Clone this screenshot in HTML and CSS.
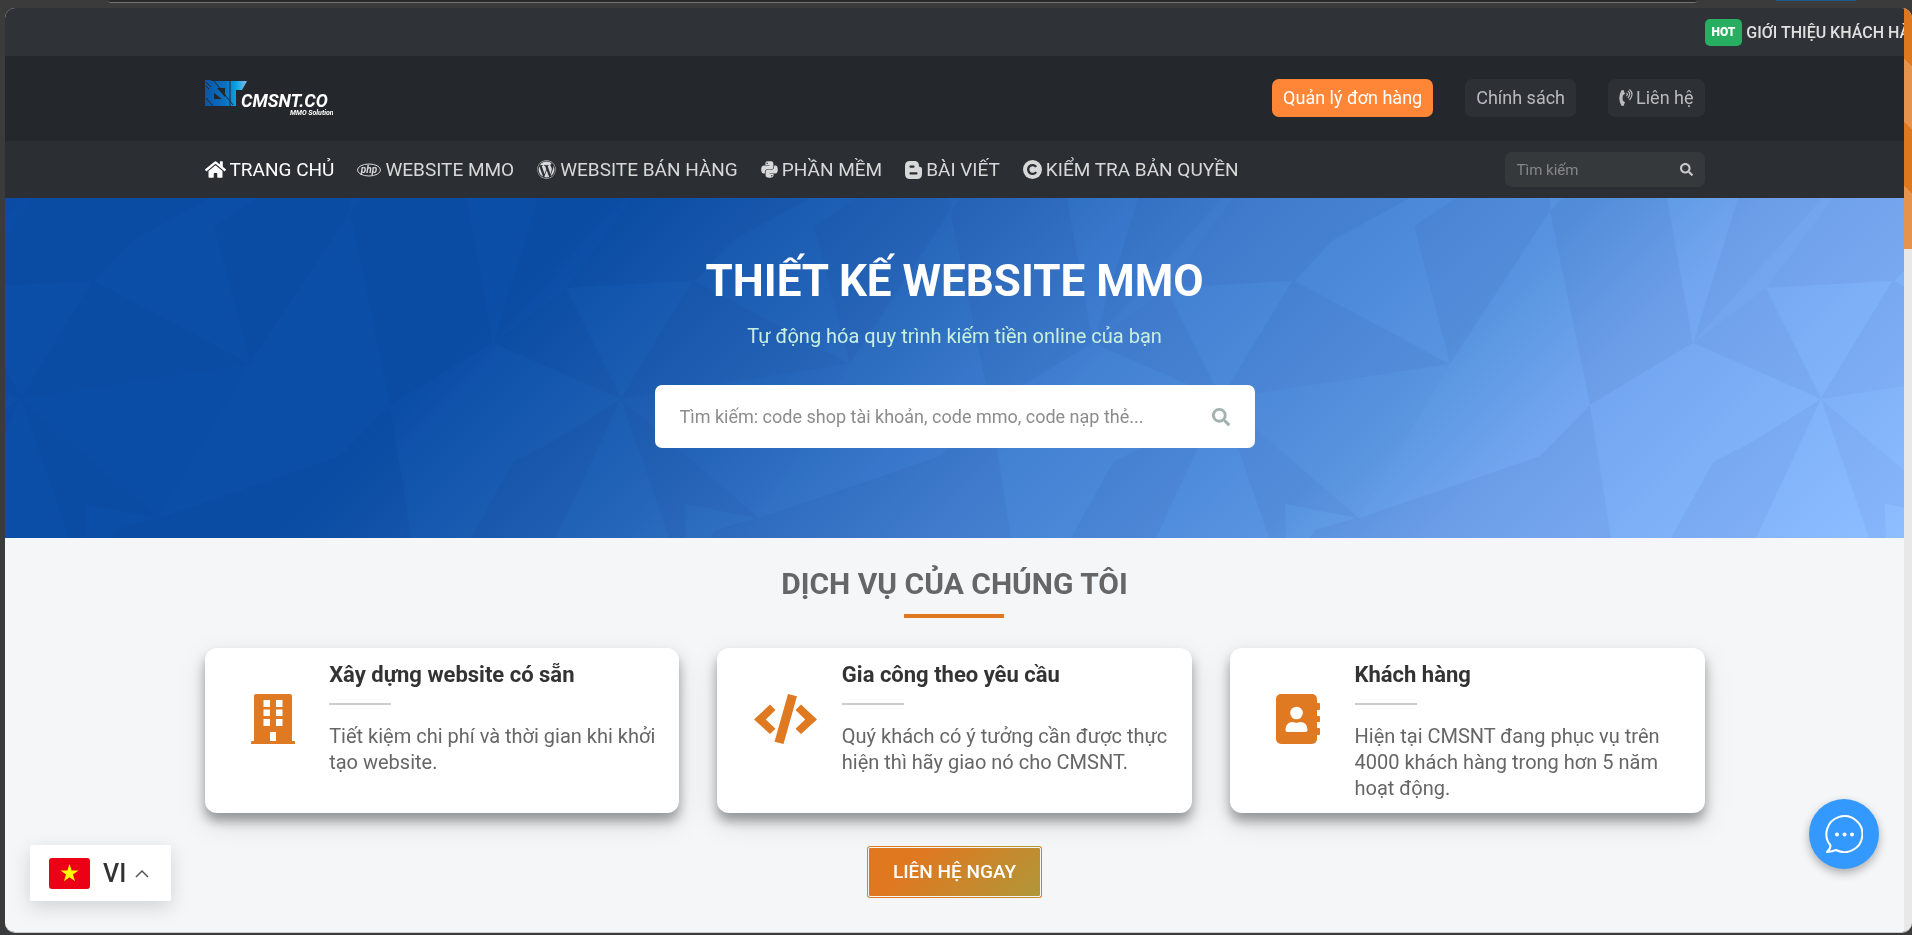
FILE: index.html
```html
<!DOCTYPE html>
<html lang="vi">

<head>
  <meta charset="UTF-8">
  <meta name="viewport" content="width=device-width, initial-scale=1.0">
  <title>CMSNT.CO - Thiết kế website MMO</title>
  <link rel="stylesheet" href="styles.css">
</head>

<body>
<svg class="sprite" aria-hidden="true">
  <symbol id="search" viewBox="0 0 512 512"><path d="M505 442.7L405.3 343c-4.5-4.5-10.6-7-17-7H372c27.6-35.3 44-79.7 44-128C416 93.1 322.9 0 208 0S0 93.1 0 208s93.1 208 208 208c48.3 0 92.7-16.4 128-44v16.3c0 6.4 2.5 12.5 7 17l99.7 99.7c9.4 9.4 24.6 9.4 33.9 0l28.3-28.3c9.4-9.4 9.4-24.6.1-34zM208 336c-70.7 0-128-57.2-128-128 0-70.7 57.2-128 128-128 70.7 0 128 57.2 128 128 0 70.7-57.2 128-128 128z"/></symbol>
</svg>

<div class="window">
  <div class="window-top">
    <div class="address"></div>
    <div class="tab-mark"></div>
  </div>

  <div class="viewport">
    <div class="page">
      <header>
        <div class="notice">
          <span class="hot">HOT</span>
          <span>GIỚI THIỆU KHÁCH HÀNG</span>
        </div>

        <div class="header-main">
          <div class="container">
            <a class="logo" href="#" aria-label="CMSNT.CO">
              <svg width="128" height="36" viewBox="0 0 128 36">
                <defs>
                  <linearGradient id="logo-blue">
                    <stop offset="0" stop-color="#0a55a5"/>
                    <stop offset=".5" stop-color="#0b72c4"/>
                    <stop offset=".75" stop-color="#08a5e4"/>
                    <stop offset="1" stop-color="#8bbcf0"/>
                  </linearGradient>
                </defs>
                <path fill="url(#logo-blue)" d="M0 0h5l2 1h35l-5 9h-6v16H0zM9 13v6h8zM12 8h8v9z" fill-rule="evenodd"/>
                <path d="M1 2l5 5M25 1v25M9 1l19 24M1 18l7 8M1 6l3 3" stroke="#24272c" stroke-width="1"/>
                <text x="36" y="27" class="logo-name">CMSNT.CO</text>
                <text x="85" y="35" class="logo-sub">MMO Solution</text>
              </svg>
            </a>
            <div class="header-links">
              <a class="pill pill-primary" href="#">Quản lý đơn hàng</a>
              <a class="pill" href="#">Chính sách</a>
              <a class="pill" href="#">
                <svg width="14" height="18" viewBox="0 0 14 18" fill="none" stroke="currentColor">
                  <path fill="currentColor" stroke="none" d="M4.500 1L6 4.800l-2 1.400q-.8 2.800 0 5.600l2 1.400L4.500 17l-2-.2Q-2 9 2.500 1.200z"/>
                  <path stroke-width="1.200" d="M7.500 4q1.600 1.300 0 3M9 2q3.300 3 0 7M10.500.5q5 4.500 0 10.500"/>
                </svg>
                Liên hệ
              </a>
            </div>
          </div>
        </div>

        <div class="header-nav">
          <div class="container">
            <nav>
              <a class="active" href="#">
                <svg width="21" height="19" viewBox="0 0 576 512"><path d="M280.370 148.260L96 300.110V464a16 16 0 0 0 16 16l112.060-.29a16 16 0 0 0 15.920-16V368a16 16 0 0 1 16-16h64a16 16 0 0 1 16 16v95.640a16 16 0 0 0 16 16.050L464 480a16 16 0 0 0 16-16V300L295.670 148.260a12.190 12.190 0 0 0-15.300 0zM571.600 251.470L488 182.560V44.050a12 12 0 0 0-12-12h-56a12 12 0 0 0-12 12v72.610L318.470 43a48 48 0 0 0-61 0L4.340 251.470a12 12 0 0 0-1.600 16.900l25.500 31A12 12 0 0 0 45.150 301l235.220-193.740a12.190 12.190 0 0 1 15.300 0L530.900 301a12 12 0 0 0 16.900-1.600l25.500-31a12 12 0 0 0-1.700-16.930z"/></svg>
                TRANG CHỦ
              </a>
              <a href="#">
                <svg width="24" height="18" viewBox="0 0 24 18"><ellipse cx="12" cy="9" rx="11.500" ry="6" fill="none" stroke="currentColor"/><text x="12" y="12" class="php">php</text></svg>
                WEBSITE MMO
              </a>
              <a href="#">
                <svg width="19" height="19" viewBox="0 0 512 512"><path d="M61.700 169.400l101.500 278C92.200 413 43.300 340.200 43.300 256c0-30.900 6.600-60.100 18.400-86.600zm337.900 75.900c0-26.300-9.400-44.500-17.500-58.700-10.800-17.500-20.900-32.400-20.900-49.900 0-19.600 14.800-37.800 35.700-37.800.9 0 1.800.1 2.800.2-37.900-34.700-88.300-55.900-143.700-55.900-74.300 0-139.700 38.100-177.800 95.900 5 .2 9.700.3 13.700.3 22.200 0 56.700-2.700 56.700-2.700 11.500-.7 12.800 16.200 1.400 17.500 0 0-11.500 1.300-24.300 2l77.500 230.400L249.800 247l-33.100-90.800c-11.500-.7-22.300-2-22.300-2-11.500-.7-10.100-18.200 1.300-17.500 0 0 35.100 2.700 56 2.700 22.200 0 56.700-2.700 56.700-2.700 11.500-.7 12.800 16.200 1.400 17.500 0 0-11.500 1.300-24.300 2l76.900 228.700 21.200-70.900c9-29.400 16-50.500 16-68.700zm-139.900 29.300l-63.800 185.500c19.100 5.600 39.200 8.700 60.100 8.700 24.800 0 48.500-4.300 70.600-12.100-.6-.9-1.100-1.900-1.500-2.900l-65.400-179.200zm183-120.700c.9 6.800 1.400 14 1.400 21.900 0 21.600-4 45.800-16.200 76.200l-65 187.900C426.200 403 468.700 334.500 468.700 256c0-37-9.400-71.800-26-102.100zM504 256c0 136.800-111.300 248-248 248C119.200 504 8 392.700 8 256 8 119.200 119.200 8 256 8c136.700 0 248 111.200 248 248zm-11.400 0c0-130.500-106.200-236.600-236.600-236.600C125.500 19.400 19.400 125.500 19.400 256S125.600 492.600 256 492.600c130.500 0 236.600-106.100 236.600-236.600z"/></svg>
                WEBSITE BÁN HÀNG
              </a>
              <a href="#">
                <svg width="17" height="19" viewBox="0 0 448 512"><path d="M439.800 200.500c-7.700-30.900-22.300-54.200-53.400-54.200h-40.100v47.400c0 36.800-31.200 67.800-66.800 67.800H172.700c-29.200 0-53.400 25-53.400 54.300v101.800c0 29 25.200 46 53.400 54.300 33.800 9.900 66.300 11.700 106.800 0 26.900-7.800 53.400-23.500 53.400-54.300v-40.700H226.200v-13.600h160.200c31.100 0 42.600-21.700 53.400-54.200 11.200-33.500 10.700-65.700 0-108.600zM286.200 404c11.100 0 20.100 9.100 20.100 20.300 0 11.300-9 20.400-20.100 20.400-11 0-20.100-9.200-20.100-20.400.1-11.300 9.100-20.300 20.100-20.300zM167.800 248.100h106.800c29.700 0 53.400-24.500 53.400-54.300V91.900c0-29-24.400-50.700-53.400-55.600-35.800-5.900-74.700-5.600-106.800.1-45.200 8-53.400 24.700-53.400 55.600v40.700h106.900v13.600h-147c-31.100 0-58.300 18.700-66.800 54.200-9.800 40.700-10.200 66.100 0 108.600 7.600 31.600 25.700 54.200 56.800 54.200H101v-48.800c0-35.300 30.500-66.400 66.800-66.400zm-6.700-142.600c-11.100 0-20.100-9.100-20.100-20.300.1-11.300 9-20.400 20.100-20.400 11 0 20.100 9.200 20.100 20.400s-9 20.300-20.100 20.300z"/></svg>
                PHẦN MỀM
              </a>
              <a href="#">
                <svg width="17" height="18" viewBox="0 0 17 18"><path fill-rule="evenodd" d="M5 0h4.500C13 0 14 2.500 14 5c0 1.500 3 .5 3 2.500V13q0 5-5 5H5q-5 0-5-5V5q0-5 5-5zm0 4.500q-1.300 1.100 0 2.300h4q1.300-1.200 0-2.300zm0 6.700q-1.300 1.200 0 2.300h7q1.300-1.100 0-2.300z"/></svg>
                BÀI VIẾT
              </a>
              <a href="#">
                <svg width="19" height="19" viewBox="0 0 18 18"><circle cx="9" cy="9" r="9"/><path d="M12.500 11.500a4.200 4.200 0 1 1 0-5" fill="none" stroke="#2b2e33" stroke-width="2.200"/></svg>
                KIỂM TRA BẢN QUYỀN
              </a>
            </nav>
            <form class="nav-search">
              <input type="text" placeholder="Tìm kiếm" aria-label="Tìm kiếm">
              <button type="button" aria-label="Tìm"><svg width="13" height="13"><use href="#search"/></svg></button>
            </form>
          </div>
        </div>
      </header>

      <section class="hero">
        <svg class="hero-pattern" width="100%" height="100%" aria-hidden="true">
          <defs>
            <pattern id="facets" width="600" height="340" patternUnits="userSpaceOnUse">
              <g fill="#0b0b07">
                <path d="M205 0h46l-42 28 36 138L90 83l37-40z"/>
                <path d="M345 13l40 194-50 51-181 62 91-154z"/>
                <path d="M345 13V0h12z"/>
                <path d="M-39 90l126-7-71 117z"/>
                <path d="M561 90l126-7-71 117z"/>
                <path d="M462 0h71l-45 145z"/>
                <path d="M488 145l-103 62 21 133h60l42-76 37-19 71-44z"/>
                <path d="M-112 145l128 56-71 44z"/>
                <path d="M16 201l-65 139H64z"/>
                <path d="M616 201l-65 139h113z"/>
                <path d="M80 306l71 14-41 12-5 8H81z"/>
                <path opacity=".7" d="M16 201l229-35-91 154z"/>
                <path opacity=".5" d="M488 145L618 0h10l-67 90zM-112 145L18 0h10l-67 90z"/>
              </g>
            </pattern>
          </defs>
          <rect width="100%" height="100%" fill="url(#facets)"/>
        </svg>
        <div class="hero-content">
          <h1>THIẾT KẾ WEBSITE MMO</h1>
          <p>Tự động hóa quy trình kiếm tiền online của bạn</p>
          <form class="hero-search">
            <input type="text" placeholder="Tìm kiếm: code shop tài khoản, code mmo, code nạp thẻ..." aria-label="Tìm kiếm sản phẩm">
            <button type="button" aria-label="Tìm"><svg width="18" height="18"><use href="#search"/></svg></button>
          </form>
        </div>
      </section>

      <section class="services">
        <h2>DỊCH VỤ CỦA CHÚNG TÔI</h2>
        <div class="container cards">
          <div class="card">
            <div class="card-icon">
              <svg width="44" height="50" viewBox="0 0 44 50"><path fill-rule="evenodd" d="M5 0h34q2 0 2 2v45h2q1 0 1 1v2H0v-2q0-1 1-1h2V2q0-2 2-2zm7.500 6v7H19V6zm12.500 0v7h6.500V6zM12.500 15.500V22H19v-6.500zm12.500 0V22h6.500v-6.500zM12.500 25v7H19v-7zM25 25v7h6.500v-7zm-6 13v9h6v-9z"/></svg>
            </div>
            <div class="card-text">
              <h3>Xây dựng website có sẵn</h3>
              <p>Tiết kiệm chi phí và thời gian khi khởi tạo website.</p>
            </div>
          </div>
          <div class="card">
            <div class="card-icon">
              <svg width="63" height="50" viewBox="0 0 63 50"><path d="M34 0l9 2.200L29.500 50l-9-2.200zM16 10.500l5.500 5.500-9.700 9.500 9.700 9.200L16 40 0 25.500zM47 10.500l16 15L47 40l-5.500-5.300 9.700-9.200-9.700-9.500z"/></svg>
            </div>
            <div class="card-text">
              <h3>Gia công theo yêu cầu</h3>
              <p>Quý khách có ý tưởng cần được thực hiện thì hãy giao nó cho CMSNT.</p>
            </div>
          </div>
          <div class="card">
            <div class="card-icon">
              <svg width="44" height="50" viewBox="0 0 44 50"><rect width="41" height="50" rx="5"/><path d="M40 9h3q1 0 1 1v5q0 1-1 1h-3zM40 22h3q1 0 1 1v4q0 1-1 1h-3zM40 34h3q1 0 1 1v5q0 1-1 1h-3z"/><circle cx="20.500" cy="19" r="6.300" fill="#fff"/><path fill="#fff" d="M9.500 36c0-5 3-8 7-8q4 1.500 8 0c4 0 7 3 7 8q0 2-2 2h-18q-2 0-2-2z"/></svg>
            </div>
            <div class="card-text">
              <h3>Khách hàng</h3>
              <p>Hiện tại CMSNT đang phục vụ trên 4000 khách hàng trong hơn 5 năm hoạt động.</p>
            </div>
          </div>
        </div>
        <a class="contact-now" href="#">LIÊN HỆ NGAY</a>
      </section>
    </div>
    <div class="scrollbar"><div class="thumb"></div></div>
  </div>
</div>

<button class="lang" type="button">
  <svg width="41" height="31" viewBox="0 0 41 31"><rect width="41" height="31" rx="3" fill="#ec0015"/><path fill="#ff0" d="M20.500 6l2.100 6.600h6.900l-5.600 4 2.200 6.700-5.600-4.100-5.600 4.100 2.200-6.700-5.600-4h6.900z"/></svg>
  <span>VI</span>
  <svg width="14" height="9" viewBox="0 0 14 9" fill="none" stroke="#555" stroke-width="1.500"><path d="M1 8l6-6 6 6"/></svg>
</button>

<button class="chat" type="button" aria-label="Chat">
  <svg width="38" height="38" viewBox="0 0 38 38" fill="none" stroke="#fff" stroke-width="2" stroke-linejoin="round"><path d="M5.500 30.500A18 18 0 1 1 11 35q-3.500 1.500-9 2 3.500-3 3.500-6.500z"/><g fill="#fff" stroke="none"><circle cx="12" cy="19.500" r="2"/><circle cx="19.500" cy="19.500" r="2"/><circle cx="27" cy="19.500" r="2"/></g></svg>
</button>
</body>
</html>
```
FILE: styles.css
```css
* {
  box-sizing: border-box;
}
body {
  margin: 0;
  font-family: Roboto, sans-serif;
  background-color: #3b3b3b;
}
h1, h2, h3, p {
  margin: 0;
}
a {
  text-decoration: none;
}
svg {
  flex-shrink: 0;
}
svg:not([fill]) {
  fill: currentColor;
}
input, button {
  font-family: inherit;
  border: 0;
  padding: 0;
  background: none;
}
input {
  flex: 1;
  min-width: 0;
  outline: 0;
}
.sprite {
  display: none;
}

/* browser frame */
.window {
  display: flex;
  flex-direction: column;
  min-height: 100vh;
  padding: 0 0 4px 5px;
}
.window-top {
  display: flex;
  height: 8px;
  padding: 0 56px 0 103px;
}
.address {
  flex: 1;
  height: 3px;
  margin-right: 79px;
  background: #292929;
  border-bottom: 1px solid #757575;
  border-radius: 0 0 8px 8px;
}
.tab-mark {
  width: 80px;
  height: 1px;
  background: #1f5a8c;
}
.viewport {
  display: flex;
  flex: 1;
  border-radius: 10px;
  overflow: hidden;
  border-bottom: 1px solid #ccc;
}
.page {
  display: flex;
  flex-direction: column;
  flex: 1;
  min-width: 0;
  background: #f4f6f8;
}
.scrollbar {
  width: 8px;
  background: #e8e8e8;
}
.thumb {
  height: 241px;
  background: repeating-linear-gradient(45deg, #e6944d 0, #e6944d 45px, #de781f 45px, #de781f 90px);
}
.container {
  display: flex;
  align-items: center;
  justify-content: space-between;
  width: 100%;
  max-width: 1500px;
  margin: 0 auto;
}

/* header */
.notice {
  display: flex;
  align-items: center;
  gap: 4px;
  height: 48px;
  padding-left: calc(50% + 750px);
  overflow: hidden;
  white-space: nowrap;
  font-size: 16px;
  font-weight: 500;
  color: #e0e0e0;
  background: #2f3236;
}
.hot {
  padding: 0 7px;
  line-height: 27px;
  font-size: 12px;
  font-weight: 900;
  color: #fff;
  background: #27ae60;
  border-radius: 5px;
}
.header-main {
  padding: 23px 0 24px;
  background: #24272c;
}
.logo {
  display: flex;
}
.logo-name {
  font: italic bold 18px Roboto, sans-serif;
  fill: #fff;
}
.logo-sub {
  font: italic bold 7px Roboto, sans-serif;
  fill: #fff;
}
.header-links {
  display: flex;
  gap: 32px;
}
.pill {
  display: flex;
  align-items: center;
  gap: 3px;
  padding: 0 11px;
  line-height: 38px;
  font-size: 18px;
  color: #b8babc;
  background: #2d3035;
  border-radius: 7px;
}
.pill-primary {
  color: #fff;
  background: #ff8637;
}
.header-nav {
  padding: 11px 0;
  background: #2b2e33;
}
nav {
  display: flex;
  gap: 23px;
}
nav a {
  display: flex;
  align-items: center;
  gap: 4px;
  font-size: 19px;
  color: #d8d8d8;
}
nav .active {
  color: #fff;
}
.php {
  font: italic bold 10px Roboto, sans-serif;
  text-anchor: middle;
}
.nav-search {
  display: flex;
  align-items: center;
  width: 200px;
  height: 35px;
  padding: 0 12px;
  color: #c8c8c8;
  background: #36393c;
  border-radius: 7px;
}
.nav-search input {
  font-size: 15px;
  color: #fff;
}
.nav-search input::placeholder {
  color: #85878a;
}
.nav-search button,
.hero-search button {
  display: flex;
  color: inherit;
}

/* hero */
.hero {
  position: relative;
  height: 340px;
  background: linear-gradient(135deg, #0a4ba3 27%, #2361b4 42%, #3f7acc 56%, #538dda 71%, #6c9ee8 79%, #88b6fb 100%);
}
.hero-pattern {
  position: absolute;
  top: 0;
  left: 0;
  mix-blend-mode: color-dodge;
}
.hero-content {
  position: relative;
  display: flex;
  flex-direction: column;
  align-items: center;
  padding-top: 53px;
}
h1 {
  line-height: 60px;
  font-size: 44px;
  font-weight: 700;
  color: #fff;
}
.hero-content p {
  margin: 12px 0 35px;
  line-height: 27px;
  font-size: 20px;
  color: #c8f0dc;
}
.hero-search {
  display: flex;
  align-items: center;
  width: 600px;
  height: 63px;
  padding: 0 25px;
  color: #a3b1b1;
  background: #fff;
  border-radius: 7px;
}
.hero-search input {
  font-size: 18px;
  color: #333;
}
.hero-search input::placeholder {
  color: #8c8c8c;
}

/* services */
.services {
  display: flex;
  flex-direction: column;
  align-items: center;
  flex: 1;
  padding: 26px 0 33px;
}
h2 {
  line-height: 40px;
  font-size: 30px;
  font-weight: 700;
  color: #666;
}
h2::after {
  content: "";
  display: block;
  width: 100px;
  height: 4px;
  margin: 10px auto 30px;
  background: #e07820;
}
.cards {
  gap: 38px;
}
.card {
  display: flex;
  flex: 1;
  height: 165px;
  padding: 12px;
  background: #fff;
  border-radius: 12px;
  box-shadow: 0 8px 12px rgba(0, 0, 0, 0.35), 0 10px 30px rgba(0, 0, 0, 0.1);
}
.card-icon {
  display: flex;
  align-items: center;
  justify-content: center;
  width: 25%;
  padding-bottom: 24px;
  color: #e07a22;
}
.card-text {
  flex: 1;
}
h3 {
  line-height: 30px;
  font-size: 22px;
  font-weight: 700;
  color: #333;
}
h3::after {
  content: "";
  display: block;
  width: 62px;
  height: 2px;
  margin: 13px 0 18px;
  background: #ccc;
}
.card-text p {
  line-height: 26px;
  font-size: 20px;
  color: #666;
}
.contact-now {
  margin-top: 32px;
  padding: 0 24px;
  line-height: 48px;
  font-size: 19px;
  font-weight: 500;
  color: #fff;
  background: linear-gradient(135deg, #e07820 25%, #b09738);
  border: 3px double #f4f6f8;
  border-radius: 4px;
}

/* floating controls */
.lang {
  position: fixed;
  left: 30px;
  bottom: 34px;
  display: flex;
  align-items: center;
  width: 141px;
  height: 56px;
  padding-left: 19px;
  font-size: 25px;
  font-weight: 500;
  color: #333;
  background: #fff;
  border-radius: 2px;
  box-shadow: 0 6px 20px rgba(0, 0, 0, 0.15);
}
.lang span {
  margin: 0 9px 0 13px;
}
.chat {
  position: fixed;
  right: 33px;
  bottom: 66px;
  display: flex;
  align-items: center;
  justify-content: center;
  width: 70px;
  height: 70px;
  background: #3399ff;
  border-radius: 50%;
  box-shadow: 0 4px 10px rgba(0, 0, 0, 0.3);
}
```
